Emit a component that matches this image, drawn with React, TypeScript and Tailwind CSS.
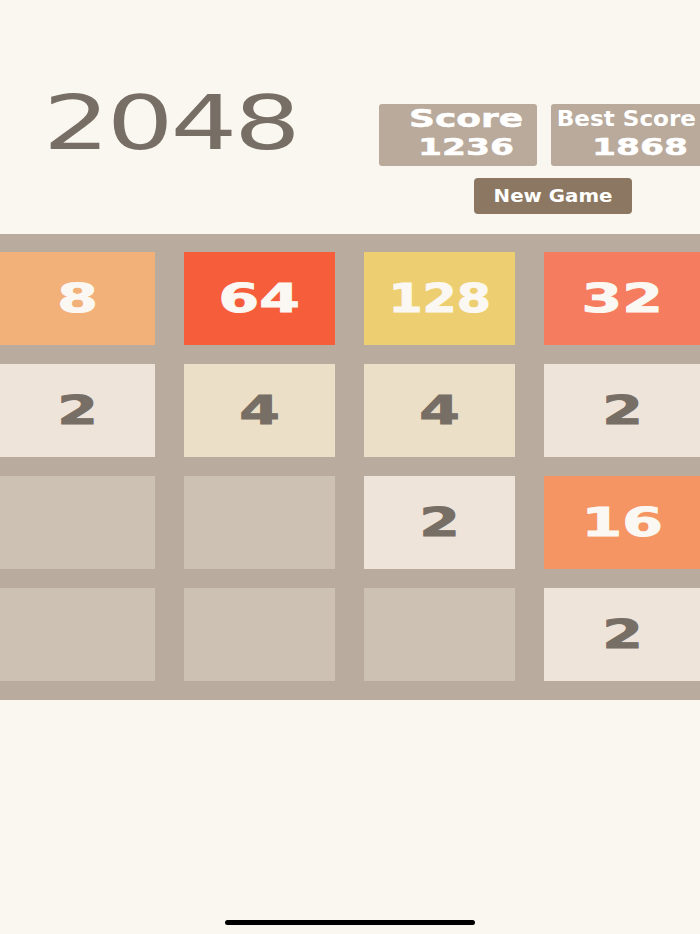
import React from "react";

const board: (number | null)[][] = [
  [8, 64, 128, 32],
  [2, 4, 4, 2],
  [null, null, 2, 16],
  [null, null, null, 2],
];

const tileStyle: Record<number, string> = {
  2: "bg-[#eee4da] text-[#776e65]",
  4: "bg-[#ebdfc7] text-[#776e65]",
  8: "bg-[#f2b179] text-[#fbf8f3]",
  16: "bg-[#f59563] text-[#fbf8f3]",
  32: "bg-[#f57c5f] text-[#fbf8f3]",
  64: "bg-[#f65e3b] text-[#fbf8f3]",
  128: "bg-[#edcf72] text-[#fbf8f3]",
};

const wide = "font-['DejaVu_Sans',Verdana,sans-serif]";

function Cell({ v }: { v: number | null }) {
  if (v === null) {
    return <div className="h-[93px] bg-[#cdc1b3]" />;
  }
  const three = String(v).length >= 3;
  return (
    <div className={`flex h-[93px] items-center justify-center ${tileStyle[v]}`}>
      <span
        className={`inline-block text-[39px] leading-none font-bold [-webkit-text-stroke:0.9px_currentColor] ${wide} ${
          three ? "scale-x-[1.26]" : "scale-x-[1.5]"
        }`}
      >
        {v}
      </span>
    </div>
  );
}

export default function App() {
  return (
    <div className="flex h-[934px] w-[700px] flex-col overflow-hidden bg-[#f9f7ef]">
      {/* header: title, scores, new game */}
      <div className="flex h-[234px] shrink-0">
        <div className="w-[379px] shrink-0 pl-[43px] pt-[86px]">
          <span
            className={`inline-block origin-left scale-x-[1.42] text-[74px] leading-[74px] tracking-[-0.03em] text-[#776e65] ${wide}`}
          >
            2048
          </span>
        </div>
        <div className="flex shrink-0 flex-col pt-[104px]">
          <div className="flex gap-[14px]">
            <div className="flex h-[62px] w-[158px] flex-col items-center rounded-[3px] bg-[#b9aa9c] pt-[1px] pl-[16px] font-bold text-white">
              <span className={`inline-block scale-x-[1.5] text-[24px] leading-[28px] [-webkit-text-stroke:0.5px_white] ${wide}`}>Score</span>
              <span className={`inline-block scale-x-[1.5] text-[23px] leading-[28px] [-webkit-text-stroke:0.5px_white] ${wide}`}>1236</span>
            </div>
            <div className="flex h-[62px] w-[158px] flex-col items-center rounded-[3px] bg-[#b9aa9c] pt-[1px] font-bold text-white">
              <span className={`mr-[8px] inline-block scale-x-[1.1] text-[21px] leading-[28px] ${wide}`}>Best Score</span>
              <span className={`ml-[20px] inline-block scale-x-[1.5] text-[23px] leading-[28px] [-webkit-text-stroke:0.5px_white] ${wide}`}>1868</span>
            </div>
          </div>
          <div className="ml-[95px] mt-[12px] flex h-[36px] w-[158px] items-center justify-center rounded-[4px] bg-[#8c7862]">
            <span className={`inline-block scale-x-[1.1] text-[18px] leading-none font-bold text-white ${wide}`}>New Game</span>
          </div>
        </div>
      </div>

      {/* game board */}
      <div className="shrink-0 bg-[#b9ab9e] pt-[18px] pb-[19px]">
        <div className="grid grid-cols-[155px_151px_151px_157px] gap-x-[29px] gap-y-[19px]">
          {board.flat().map((v, i) => (
            <Cell key={i} v={v} />
          ))}
        </div>
      </div>

      <div className="flex-1" />
      <div className="mb-[9px] flex justify-center">
        <div className="h-[5px] w-[250px] rounded-full bg-black" />
      </div>
    </div>
  );
}
